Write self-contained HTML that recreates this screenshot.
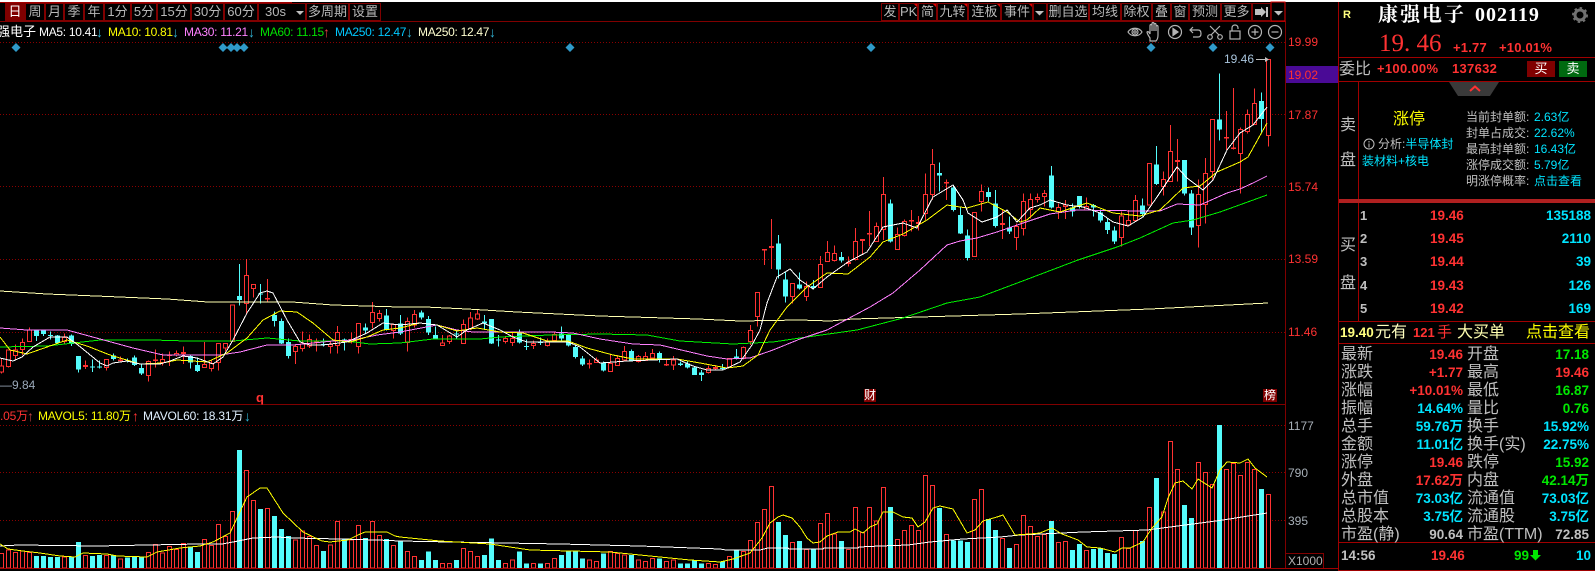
<!DOCTYPE html>
<html><head><meta charset="utf-8"><style>
html,body{margin:0;padding:0;background:#000}
#p{position:relative;width:1595px;height:571px;overflow:hidden;background:#000;font-family:"Liberation Sans","WenQuanYi Zen Hei","Noto Sans CJK SC",sans-serif;color:#c0c0c0}
svg{position:absolute;left:0;top:0}
.t{position:absolute;white-space:nowrap;line-height:16px;font-size:12px}
.ar{font-size:14px}
.b{position:absolute;top:3px;height:18px;border:1px solid #800000;box-sizing:border-box;text-align:center;line-height:16px;color:#b8b8b8;font-size:13px;white-space:nowrap;overflow:hidden}
.rd{color:#ff3232}.cy{color:#00e4ff}.gr{color:#00e800}.ye{color:#ffff00}.wh{color:#fff}.g{color:#c0c0c0}
.bd{font-weight:bold}
.r{position:absolute;left:1341px;width:248px;height:18px;line-height:18px;font-size:13.5px;font-weight:bold}
.r span{position:absolute;top:0;white-space:nowrap}
.r .a,.r .c{font-size:16px;font-weight:normal;color:#c0c0c0}
.r .a{left:0}.r .b2{right:126px}.r .c{left:126px}.r .d{right:0}
.rw,.cw{fill:none;stroke-width:3}.rw{stroke:#ff3232}.cw{stroke:#54fcfc}
.rb{fill:#000;stroke:#ff3232;stroke-width:3}.cb{fill:#54fcfc;stroke:none}
</style></head><body><div id="p">
<svg width="1595" height="571" viewBox="0 0 1595 571">
<rect x="0" y="0" width="1595" height="2" fill="#fff"/>
<rect x="0" y="2" width="292" height="1" fill="#a00000"/>
<g stroke="#8a0000" stroke-width="1" stroke-dasharray="1 2" fill="none">
<path d="M0 42.5H1285M0 114.5H1285M0 186.5H1285M0 259.5H1285M0 332.5H1285M0 425.5H1285M0 472.5H1285M0 520.5H1285"/>
</g>
<g fill="#2f9ac9"><path d="M16 43l4.5 4.5-4.5 4.5-4.5-4.5zM223 43l4.5 4.5-4.5 4.5-4.5-4.5zM231 43l4.5 4.5-4.5 4.5-4.5-4.5zM237 43l4.5 4.5-4.5 4.5-4.5-4.5zM244 43l4.5 4.5-4.5 4.5-4.5-4.5zM570 43l4.5 4.5-4.5 4.5-4.5-4.5zM871 43l4.5 4.5-4.5 4.5-4.5-4.5zM1151 43l4.5 4.5-4.5 4.5-4.5-4.5zM1213 43l4.5 4.5-4.5 4.5-4.5-4.5zM1270 43l4.5 4.5-4.5 4.5-4.5-4.5z"/></g>

<g shape-rendering="crispEdges">
<g transform="translate(0,240) scale(.33333)">
<path class="rw" d="M4.5 355V400M25.5 330V382M46.5 313V360M67.5 295V345M88.5 262V305M193.5 280V312M256.5 362V387M319.5 358V392M361.5 350V368M445.5 362V425M466.5 328V382M487.5 340V376M508.5 334V378M529.5 332V350M550.5 320V372M613.5 306V383M634.5 360V395M655.5 310V392M676.5 310V335M697.5 195V305M739.5 57V220M760.5 133V172M802.5 117V184M886.5 312V372M907.5 275V335M928.5 283V324M949.5 295V335M991.5 305V340M1012.5 258V340M1054.5 277V310M1075.5 250V340M1117.5 186V266M1138.5 210V245M1180.5 250V296"/>
<path class="rb" d="M-1.5 378h12V396h-12zM19.5 330h12V380h-12zM40.5 330h12V347h-12zM61.5 307h12V328h-12zM82.5 270h12V305h-12zM187.5 292h12V304h-12zM250.5 376h12V380h-12zM313.5 358h12V382h-12zM355.5 360h12V362h-12zM439.5 365h12V406h-12zM460.5 360h12V362h-12zM481.5 358h12V368h-12zM502.5 345h12V347h-12zM523.5 340h12V345h-12zM544.5 338h12V340h-12zM607.5 373h12V383h-12zM628.5 370h12V386h-12zM649.5 310h12V368h-12zM670.5 310h12V324h-12zM691.5 195h12V305h-12zM733.5 106h12V190h-12zM754.5 133h12V146h-12zM796.5 175h12V177h-12zM880.5 320h12V334h-12zM901.5 312h12V326h-12zM922.5 298h12V318h-12zM943.5 305h12V308h-12zM985.5 314h12V320h-12zM1006.5 277h12V316h-12zM1048.5 298h12V300h-12zM1069.5 250h12V319h-12zM1111.5 217h12V248h-12zM1132.5 220h12V236h-12zM1174.5 253h12V272h-12z"/>
<path class="cw" d="M109.5 268V303M130.5 268V288M151.5 274V298M172.5 285V312M214.5 283V318M235.5 348V398M277.5 358V396M298.5 362V385M340.5 340V362M382.5 355V368M403.5 346V378M424.5 373V405M571.5 345V386M592.5 352V396M718.5 72V197M781.5 132V190M823.5 215V260M844.5 235V312M865.5 295V356M970.5 295V320M1033.5 295V332M1096.5 250V282M1159.5 207V272"/>
<path class="cb" d="M102 270h15V288h-15zM123 270h15V282h-15zM144 285h15V288h-15zM165 287h15V309h-15zM207 287h15V312h-15zM228 348h15V389h-15zM270 380h15V383h-15zM291 380h15V383h-15zM333 347h15V357h-15zM375 361h15V364h-15zM396 352h15V375h-15zM417 384h15V400h-15zM564 348h15V368h-15zM585 375h15V393h-15zM711 168h15V180h-15zM774 160h15V163h-15zM816 225h15V243h-15zM837 243h15V310h-15zM858 306h15V348h-15zM963 312h15V315h-15zM1026 298h15V306h-15zM1089 262h15V272h-15zM1152 226h15V270h-15z"/>
</g>
<g transform="translate(400,280) scale(.33333)">
<path class="rw" d="M22.5 113V215M43.5 90V143M127.5 165V196M148.5 165V192M190.5 118V191M211.5 96V150M232.5 88V120M316.5 168V190M337.5 155V198M400.5 182V207M442.5 175V200M463.5 155V185M568.5 238V266M589.5 232V248M631.5 225V275M652.5 225V258M673.5 198V243M715.5 225V248M736.5 216V243M757.5 207V238M799.5 235V258M820.5 228V270M925.5 256V281M946.5 255V270M988.5 236V263M1030.5 200V238M1051.5 135V195M1072.5 37V140"/>
<path class="rb" d="M16.5 125h12V188h-12zM37.5 103h12V135h-12zM121.5 189h12V196h-12zM142.5 168h12V185h-12zM184.5 133h12V191h-12zM205.5 114h12V145h-12zM226.5 102h12V117h-12zM310.5 176h12V185h-12zM331.5 175h12V188h-12zM394.5 190h12V196h-12zM436.5 183h12V197h-12zM457.5 163h12V181h-12zM562.5 250h12V252h-12zM583.5 240h12V247h-12zM625.5 251h12V275h-12zM646.5 235h12V256h-12zM667.5 214h12V240h-12zM709.5 230h12V245h-12zM730.5 230h12V241h-12zM751.5 220h12V234h-12zM793.5 253h12V255h-12zM814.5 240h12V255h-12zM919.5 265h12V277h-12zM940.5 263h12V265h-12zM982.5 236h12V263h-12zM1024.5 202h12V236h-12zM1045.5 151h12V185h-12zM1066.5 37h12V110h-12z"/>
<path class="cw" d="M1.5 105V165M64.5 92V118M85.5 108V165M106.5 140V178M169.5 152V175M253.5 105V150M274.5 117V192M295.5 165V200M358.5 148V190M379.5 178V210M421.5 172V195M484.5 140V185M505.5 165V199M526.5 195V235M547.5 228V258M610.5 245V274M694.5 208V244M778.5 215V248M841.5 245V258M862.5 245V266M883.5 258V285M904.5 270V303M967.5 252V272M1009.5 207V238"/>
<path class="cb" d="M-6 130h15V160h-15zM57 98h15V112h-15zM78 117h15V158h-15zM99 165h15V175h-15zM162 160h15V163h-15zM246 125h15V130h-15zM267 117h15V190h-15zM288 178h15V182h-15zM351 155h15V187h-15zM372 198h15V201h-15zM414 186h15V189h-15zM477 160h15V176h-15zM498 165h15V197h-15zM519 201h15V231h-15zM540 235h15V254h-15zM603 248h15V272h-15zM687 213h15V242h-15zM771 219h15V236h-15zM834 250h15V255h-15zM855 251h15V263h-15zM876 262h15V285h-15zM897 277h15V285h-15zM960 264h15V267h-15zM1002 229h15V236h-15z"/>
</g>
<g transform="translate(720,130) scale(.33333)">
<path class="rw" d="M133.5 358V405M154.5 267V417M217.5 460V520M259.5 455V513M301.5 378V472M322.5 333V395M343.5 346V395M385.5 380V410M406.5 294V392M427.5 328V375M448.5 243V350M469.5 277V335M490.5 141V330M532.5 292V358M553.5 268V320M574.5 240V305M595.5 258V302M616.5 130V270M637.5 57V210M679.5 148V210M763.5 247V380M784.5 163V245"/>
<path class="rb" d="M127.5 358h12V360h-12zM148.5 350h12V352h-12zM211.5 460h12V500h-12zM253.5 470h12V499h-12zM295.5 403h12V472h-12zM316.5 367h12V394h-12zM337.5 371h12V391h-12zM379.5 397h12V400h-12zM400.5 334h12V388h-12zM421.5 328h12V331h-12zM442.5 310h12V312h-12zM463.5 289h12V334h-12zM484.5 193h12V298h-12zM526.5 314h12V358h-12zM547.5 274h12V316h-12zM568.5 271h12V273h-12zM589.5 278h12V280h-12zM610.5 193h12V251h-12zM631.5 103h12V193h-12zM673.5 157h12V159h-12zM757.5 247h12V380h-12zM778.5 184h12V215h-12z"/>
<path class="cw" d="M175.5 315V445M196.5 425V518M238.5 427V478M280.5 450V478M364.5 366V398M511.5 208V338M658.5 98V185M700.5 165V245M721.5 230V312M742.5 298V392M805.5 172V215M826.5 180V292"/>
<path class="cb" d="M168 340h15V418h-15zM189 448h15V500h-15zM231 463h15V476h-15zM273 468h15V474h-15zM357 381h15V392h-15zM504 220h15V335h-15zM651 129h15V137h-15zM693 172h15V240h-15zM714 255h15V311h-15zM735 316h15V384h-15zM798 186h15V201h-15zM819 220h15V288h-15z"/>
</g>
<g transform="translate(1000,50) scale(.33333)">
<path class="rw" d="M7.5 480V567M49.5 520V600M70.5 430V556M91.5 430V506M112.5 430V458M133.5 420V470M175.5 460V507M196.5 450V507M259.5 442V482M364.5 485V590M385.5 480V530M406.5 435V515M448.5 340V465M490.5 365V437M511.5 225V395M532.5 267V395M595.5 388V593M616.5 324V520M637.5 208V390M679.5 183V300M700.5 114V298M721.5 232V430M742.5 178V250M763.5 115V225M805.5 28V290"/>
<path class="rb" d="M1.5 521h12V523h-12zM43.5 530h12V563h-12zM64.5 455h12V536h-12zM85.5 448h12V478h-12zM106.5 442h12V449h-12zM127.5 430h12V440h-12zM169.5 472h12V485h-12zM190.5 465h12V470h-12zM253.5 470h12V480h-12zM358.5 498h12V562h-12zM379.5 512h12V525h-12zM400.5 451h12V512h-12zM442.5 340h12V465h-12zM484.5 388h12V410h-12zM505.5 304h12V395h-12zM526.5 331h12V335h-12zM589.5 433h12V526h-12zM610.5 370h12V463h-12zM631.5 208h12V365h-12zM673.5 262h12V264h-12zM694.5 294h12V296h-12zM715.5 238h12V310h-12zM736.5 193h12V245h-12zM757.5 160h12V224h-12zM799.5 28h12V257h-12z"/>
<path class="cw" d="M28.5 500V552M154.5 348V475M217.5 460V500M238.5 438V475M280.5 462V500M301.5 478V517M322.5 505V552M343.5 530V582M427.5 445V500M469.5 288V405M553.5 330V436M574.5 420V555M658.5 70V272M784.5 127V250"/>
<path class="cb" d="M21 533h15V545h-15zM147 376h15V473h-15zM210 472h15V485h-15zM231 438h15V470h-15zM273 465h15V472h-15zM294 487h15V512h-15zM315 516h15V540h-15zM336 541h15V575h-15zM420 466h15V492h-15zM462 343h15V402h-15zM546 330h15V430h-15zM567 430h15V533h-15zM651 208h15V239h-15zM777 153h15V207h-15z"/>
</g>

<!-- MA lines -->
<g fill="none" stroke-width="1">
<polyline stroke="#ffffb0" points="0,291 47,294 96,296 167,299 208,302 292,302 333,305 400,307 425,307 467,309 517,312 600,316 698,319 740,321 800,320 830,321 853,319 920,317 1020,314 1150,309 1268,303"/>
<polyline stroke="#00f000" points="0,347 47,346 100,340 153,340 187,341 233,341 267,338 300,341 347,341 370,344 400,343 433,339 480,339 500,337 550,335 600,334 647,335 680,341 733,344 773,342 800,338 857,330 903,318 947,303 980,297 1020,282 1078,260 1117,247 1140,238 1173,223 1193,220 1220,212 1267,195"/>
<polyline stroke="#ff80ff" points="0,328 27,330 67,330 100,339 133,348 163,355 220,355 240,352 267,345 293,345 333,341 353,340 377,335 400,332 437,325 457,330 473,332 550,332 573,333 600,339 633,344 660,345 707,356 727,359 750,358 773,350 800,339 827,330 870,307 893,293 920,270 947,245 960,241 977,238 997,232 1023,223 1050,214 1077,210 1143,211 1160,211 1177,204 1200,205 1227,193 1240,189 1253,183 1267,176"/>
<polyline stroke="#ffff00" points="0,337 10,350 27,354 47,347 67,340 87,346 110,355 140,364 163,363 177,360 207,362 227,353 247,338 263,320 280,311 297,312 313,323 333,340 350,342 367,337 383,330 400,328 420,323 437,325 457,331 477,328 500,332 523,333 547,341 568,341 587,348 613,355 633,359 677,359 700,363 727,368 743,366 758,355 770,330 787,307 807,287 827,273 848,274 870,257 883,242 903,234 927,220 947,205 967,208 988,202 1007,212 1020,222 1027,220 1040,208 1060,212 1087,203 1113,213 1140,216 1160,210 1183,188 1200,186 1217,172 1240,162 1248,157 1267,123"/>
<polyline stroke="#ffffff" points="0,358 13,361 22,357 33,347 50,337 67,337 78,345 100,363 107,366 113,363 127,361 140,364 160,364 170,361 183,356 197,358 213,364 223,357 233,340 247,313 260,293 267,291 273,293 287,320 300,342 310,345 323,345 347,342 367,333 383,323 400,325 420,323 437,325 457,337 467,330 483,323 500,330 513,337 527,342 547,342 568,342 580,347 600,363 627,361 677,359 693,366 707,370 723,370 740,362 752,345 760,330 767,303 777,277 790,269 800,280 813,289 827,277 848,262 867,252 883,227 903,223 917,228 933,197 953,185 963,200 968,213 982,222 997,217 1007,210 1017,222 1030,208 1040,205 1050,200 1067,205 1083,207 1100,213 1113,222 1128,226 1143,217 1157,197 1177,167 1187,178 1203,190 1213,180 1227,150 1240,133 1253,125 1267,107"/>
</g>

<!-- Volume bars -->
<g transform="translate(0,395) scale(.33333)">
<path class="rb" d="M-1.5 475h12V519h-12zM19.5 465h12V519h-12zM40.5 472h12V519h-12zM61.5 468h12V519h-12zM82.5 472h12V519h-12zM187.5 486h12V519h-12zM250.5 481h12V519h-12zM313.5 481h12V519h-12zM355.5 492h12V519h-12zM439.5 472h12V519h-12zM460.5 448h12V519h-12zM481.5 474h12V519h-12zM502.5 454h12V519h-12zM523.5 464h12V519h-12zM544.5 445h12V519h-12zM607.5 433h12V519h-12zM628.5 452h12V519h-12zM649.5 388h12V519h-12zM670.5 424h12V519h-12zM691.5 349h12V519h-12zM733.5 226h12V519h-12zM754.5 316h12V519h-12zM796.5 340h12V519h-12zM880.5 435h12V519h-12zM901.5 408h12V519h-12zM922.5 425h12V519h-12zM943.5 451h12V519h-12zM985.5 450h12V519h-12zM1006.5 379h12V519h-12zM1048.5 435h12V519h-12zM1069.5 391h12V519h-12zM1111.5 379h12V519h-12zM1132.5 421h12V519h-12zM1174.5 451h12V519h-12z"/>
<path class="cb" d="M102 483h15V519h-15zM123 483h15V519h-15zM144 486h15V519h-15zM165 486h15V519h-15zM207 486h15V519h-15zM228 441h15V519h-15zM270 483h15V519h-15zM291 480h15V519h-15zM333 482h15V519h-15zM375 488h15V519h-15zM396 484h15V519h-15zM417 484h15V519h-15zM564 456h15V519h-15zM585 471h15V519h-15zM711 165h15V519h-15zM774 342h15V519h-15zM816 363h15V519h-15zM837 402h15V519h-15zM858 423h15V519h-15zM963 468h15V519h-15zM1026 430h15V519h-15zM1089 429h15V519h-15zM1152 432h15V519h-15z"/>
</g>
<g transform="translate(400,395) scale(.33333)">
<path class="rb" d="M16.5 470h12V519h-12zM37.5 485h12V519h-12zM121.5 505h12V519h-12zM142.5 505h12V519h-12zM184.5 460h12V519h-12zM205.5 470h12V519h-12zM226.5 485h12V519h-12zM310.5 505h12V519h-12zM331.5 495h12V519h-12zM394.5 505h12V519h-12zM436.5 505h12V519h-12zM457.5 490h12V519h-12zM562.5 495h12V519h-12zM583.5 500h12V519h-12zM625.5 470h12V519h-12zM646.5 475h12V519h-12zM667.5 480h12V519h-12zM709.5 495h12V519h-12zM730.5 500h12V519h-12zM751.5 490h12V519h-12zM793.5 500h12V519h-12zM814.5 495h12V519h-12zM919.5 505h12V519h-12zM940.5 508h12V519h-12z"/>
<path class="cb" d="M-6 440h15V519h-15zM57 495h15V519h-15zM78 470h15V519h-15zM99 495h15V519h-15zM162 495h15V519h-15zM246 480h15V519h-15zM267 430h15V519h-15zM288 495h15V519h-15zM351 470h15V519h-15zM372 505h15V519h-15zM414 505h15V519h-15zM477 480h15V519h-15zM498 470h15V519h-15zM519 470h15V519h-15zM540 490h15V519h-15zM603 475h15V519h-15zM687 480h15V519h-15zM771 490h15V519h-15zM834 505h15V519h-15zM855 505h15V519h-15zM876 495h15V519h-15zM897 505h15V519h-15z"/>
</g>
<g transform="translate(720,395) scale(.33333)">
<path class="rb" d="M22.5 484h12V519h-12zM64.5 469h12V519h-12zM85.5 436h12V519h-12zM106.5 382h12V519h-12zM127.5 343h12V519h-12zM148.5 274h12V519h-12zM211.5 442h12V519h-12zM253.5 464h12V519h-12zM295.5 385h12V519h-12zM316.5 355h12V519h-12zM337.5 417h12V519h-12zM379.5 463h12V519h-12zM400.5 337h12V519h-12zM421.5 412h12V519h-12zM442.5 337h12V519h-12zM463.5 378h12V519h-12zM484.5 277h12V519h-12zM526.5 433h12V519h-12zM547.5 406h12V519h-12zM568.5 391h12V519h-12zM589.5 406h12V519h-12zM610.5 241h12V519h-12zM631.5 271h12V519h-12zM673.5 418h12V519h-12zM757.5 313h12V519h-12zM778.5 283h12V519h-12zM841.5 430h12V519h-12zM883.5 448h12V519h-12z"/>
<path class="cb" d="M0 500h15V519h-15zM42 467h15V519h-15zM168 381h15V519h-15zM189 420h15V519h-15zM231 438h15V519h-15zM273 464h15V519h-15zM357 438h15V519h-15zM504 336h15V519h-15zM651 339h15V519h-15zM693 436h15V519h-15zM714 436h15V519h-15zM735 441h15V519h-15zM798 372h15V519h-15zM819 405h15V519h-15zM861 459h15V519h-15z"/>
</g>
<g transform="translate(1020,395) scale(.33333)">
<path class="rb" d="M4.5 361h12V519h-12zM25.5 394h12V519h-12zM46.5 424h12V519h-12zM67.5 418h12V519h-12zM109.5 442h12V519h-12zM130.5 439h12V519h-12zM193.5 466h12V519h-12zM298.5 427h12V519h-12zM319.5 460h12V519h-12zM340.5 406h12V519h-12zM382.5 337h12V519h-12zM424.5 351h12V519h-12zM445.5 139h12V519h-12zM466.5 223h12V519h-12zM529.5 202h12V519h-12zM550.5 232h12V519h-12zM571.5 268h12V519h-12zM613.5 223h12V519h-12zM634.5 205h12V519h-12zM655.5 241h12V519h-12zM676.5 202h12V519h-12zM697.5 223h12V519h-12zM739.5 298h12V519h-12z"/>
<path class="cb" d="M87 378h15V519h-15zM150 465h15V519h-15zM171 447h15V519h-15zM213 462h15V519h-15zM234 460h15V519h-15zM255 474h15V519h-15zM276 477h15V519h-15zM360 438h15V519h-15zM402 249h15V519h-15zM486 330h15V519h-15zM507 369h15V519h-15zM591 90h15V519h-15zM717 282h15V519h-15z"/>
</g>
<g fill="none" stroke-width="1">
<polyline stroke="#ffffff" points="0,546 19,545 96,546 200,544 222,544 233,542 243,540 253,538 277,537 293,538 340,539 377,540 400,541 450,542 560,544 640,546 720,549 726,550 760,550 768,548 788,548 789,549 823,549 824,548 858,548 859,547 880,546 908,545 930,542 963,539 1000,537 1020,535 1083,532 1147,530 1170,527 1193,524 1223,520 1267,513"/>
<polyline stroke="#ffff00" points="0,544 8,549 23,551 40,553 60,556 75,557 83,553 107,554 117,556 147,557 157,552 180,548 200,546 213,542 230,533 237,518 247,497 260,488 267,488 283,513 303,532 322,541 330,542 348,540 358,535 365,532 387,532 395,536 400,537 440,541 490,544 530,550 570,551 610,552 650,556 690,560 720,562 733,559 750,553 762,538 770,523 778,517 783,515 792,518 800,527 807,538 813,543 820,542 827,536 838,532 850,532 855,529 863,533 870,527 877,524 883,512 893,512 903,517 912,518 918,527 925,522 933,508 940,506 953,509 967,533 975,530 983,521 997,517 1003,515 1015,535 1030,534 1040,533 1052,528 1062,534 1078,540 1087,547 1100,548 1115,552 1122,548 1130,548 1143,542 1152,528 1162,517 1168,498 1175,483 1183,481 1192,489 1198,479 1212,488 1220,470 1227,462 1240,463 1248,459 1255,468 1267,477"/>
</g>

<!-- frame lines -->
<rect x="0" y="404" width="1285" height="1" fill="#800000"/>
<rect x="0" y="568" width="1338" height="1" fill="#a00000"/>
<rect x="1285" y="21" width="1" height="547" fill="#800000"/>
<rect x="1338" y="2" width="1" height="569" fill="#a00000"/>
<rect x="0" y="21" width="1285" height="1" fill="#800000"/>
<rect x="1286" y="66" width="52" height="17" fill="#4a0a96"/>
<rect x="1286" y="553" width="37" height="1" fill="#800000"/>
<rect x="1323" y="553" width="1" height="15" fill="#800000"/>
<rect x="1339" y="57" width="256" height="1" fill="#a00000"/>
<rect x="1339" y="81" width="256" height="1" fill="#a00000"/>
<rect x="1358" y="82" width="1" height="239" fill="#a00000"/>
<rect x="1339" y="199" width="256" height="4" fill="#b02020"/>
<rect x="1339" y="321" width="256" height="1" fill="#a00000"/>
<rect x="1339" y="343" width="256" height="1" fill="#a00000"/>
<rect x="1339" y="542" width="256" height="1" fill="#a00000"/>
<rect x="1339" y="570" width="256" height="1" fill="#a00000"/>
</g>
<polygon points="1449,82 1499,82 1490,96 1458,96" fill="#3a3a3a"/>
<polyline points="1470,91 1475,86.5 1480,91" fill="none" stroke="#ff3232" stroke-width="2"/>

<!-- 19.46 arrow -->
<path d="M1256 59.5H1266" stroke="#c0c0c0"/><path d="M1265 57l4 2.5-4 2.5z" fill="#c0c0c0"/>
<!-- corner triangles -->
<g fill="#e00000"><path d="M913 3h5v5zM932 3h5v5zM963 3h5v5zM996 3h5v5zM1028 3h5v5z"/></g>
<!-- toolbar small arrows -->
<g fill="#c0c0c0"><path d="M296 11h8l-4 4zM1035 11h9l-4.500 4.500zM1274 11h9l-4.500 4.500zM1255 9h6v-2l5 5-5 5v-2h-6zM1266 7h2v10h-2z"/></g>
<rect x="1271" y="2" width="14" height="19" fill="none" stroke="#e00000" stroke-width="1"/>

<!-- top-right icons -->
<g fill="none" stroke="#b4b4b4" stroke-width="1.2">
<path d="M1128 32c3-5 11-5 14 0-3 5-11 5-14 0z"/><circle cx="1135" cy="32" r="3"/><circle cx="1135" cy="32" r="1.2"/>
<path d="M1150 38c-2-3-3-5-3-6 1-1 2 0 3 2v-8c0-2 2-2 2 0v5-7c0-2 2-2 2 0v7-6c0-2 2-2 2 0v6-4c0-2 2-2 2 0v8c0 3-1 5-2 6h-6z"/>
<circle cx="1175" cy="32" r="6.500"/><path d="M1173 28.500l5 3.500-5 3.500z" fill="#b4b4b4"/>
<path d="M1193 27l-3 3 3 3M1190 30h8c2 0 3 1.500 3 3.500s-1 3.500-3 3.500h-5"/>
<path d="M1210 26l9 9M1220 26l-9 9"/><circle cx="1210" cy="37" r="2.300"/><circle cx="1220" cy="37" r="2.300"/>
<rect x="1230" y="31" width="10" height="8"/><path d="M1232 31v-3c0-4 6-4 6 0v1"/>
<circle cx="1255" cy="32" r="6.500"/><path d="M1251.500 32h7M1255 28.500v7"/>
<circle cx="1275" cy="32" r="6.500"/><path d="M1271.500 32h7"/>
</g>
<!-- gear -->
<circle cx="1580" cy="15" r="5" fill="none" stroke="#707070" stroke-width="3"/>
<circle cx="1580" cy="15" r="7" fill="none" stroke="#707070" stroke-width="2" stroke-dasharray="2.500 2.900"/>
<!-- info circle -->
<circle cx="1369" cy="144" r="5" fill="none" stroke="#c0c0c0"/><path d="M1369 141v1.500M1369 143.500v4" stroke="#c0c0c0"/>
<!-- green arrow -->
<path d="M1533 550h5v5h3l-5.500 5.500-5.500-5.500h3z" fill="#00e800"/>
</svg>

<!-- left toolbar -->
<div class="b wh" style="left:5px;width:20px;background:#800000;color:#fff">日</div>
<div class="b" style="left:25px;width:20px">周</div>
<div class="b" style="left:45px;width:19px">月</div>
<div class="b" style="left:64px;width:20px">季</div>
<div class="b" style="left:84px;width:20px">年</div>
<div class="b" style="left:104px;width:27px">1分</div>
<div class="b" style="left:131px;width:26px">5分</div>
<div class="b" style="left:157px;width:34px">15分</div>
<div class="b" style="left:191px;width:33px">30分</div>
<div class="b" style="left:224px;width:34px">60分</div>
<div class="b" style="left:258px;width:48px;text-align:left;padding-left:6px;background:none">30s</div>
<div class="b" style="left:306px;width:43px">多周期</div>
<div class="b" style="left:349px;width:32px">设置</div>
<!-- right toolbar -->
<div class="b" style="left:881px;width:18px">发</div>
<div class="b" style="left:899px;width:19px">PK</div>
<div class="b" style="left:918px;width:19px">简</div>
<div class="b" style="left:937px;width:31px">九转</div>
<div class="b" style="left:968px;width:33px">连板</div>
<div class="b" style="left:1001px;width:32px">事件</div>
<div class="b" style="left:1033px;width:14px;background:none"></div>
<div class="b" style="left:1047px;width:42px">删自选</div>
<div class="b" style="left:1089px;width:32px">均线</div>
<div class="b" style="left:1121px;width:31px">除权</div>
<div class="b" style="left:1152px;width:19px">叠</div>
<div class="b" style="left:1171px;width:18px">窗</div>
<div class="b" style="left:1189px;width:32px">预测</div>
<div class="b" style="left:1221px;width:31px">更多</div>
<div class="b" style="left:1252px;width:19px;background:none"></div>

<!-- legend -->
<div class="t wh" style="left:-11px;top:24px;font-size:13px;width:47px;overflow:hidden;color:#fff;text-align:right">强电子</div>
<div class="t" style="left:39px;top:24px;color:#fff;letter-spacing:-.3px">MA5: 10.41</div><div class="t ar" style="left:96px;top:24px;color:#30b0d0">↓</div>
<div class="t ye" style="left:108px;top:24px;letter-spacing:-.3px">MA10: 10.81</div><div class="t ar" style="left:172px;top:24px;color:#30b0d0">↓</div>
<div class="t" style="left:184px;top:24px;color:#ff80ff;letter-spacing:-.3px">MA30: 11.21</div><div class="t ar" style="left:248px;top:24px;color:#30b0d0">↓</div>
<div class="t" style="left:260px;top:24px;color:#00e000;letter-spacing:-.3px">MA60: 11.15</div><div class="t ar" style="left:323px;top:24px;color:#e04040">↑</div>
<div class="t" style="left:335px;top:24px;color:#00c8ff;letter-spacing:-.3px">MA250: 12.47</div><div class="t ar" style="left:406px;top:24px;color:#30b0d0">↓</div>
<div class="t" style="left:418px;top:24px;color:#ffffd0;letter-spacing:-.3px">MA250: 12.47</div><div class="t ar" style="left:489px;top:24px;color:#30b0d0">↓</div>

<div class="t" style="left:1224px;top:51px;color:#a8c4dc">19.46</div>
<div class="t" style="left:0;top:377px;color:#9aa8b8">—9.84</div>
<div class="t rd bd" style="left:256px;top:390px;font-size:13px">q</div>
<div class="t wh" style="left:864px;top:389px;width:12px;height:13px;line-height:13px;background:#800000;font-size:12px;text-align:center;overflow:hidden">财</div>
<div class="t wh" style="left:1263px;top:389px;width:14px;height:13px;line-height:13px;background:#800000;font-size:12px;text-align:center;overflow:hidden">榜</div>

<!-- volume legend -->
<div class="t rd" style="left:0;top:408px;letter-spacing:-.2px">.05万</div><div class="t ar" style="left:27px;top:408px;color:#c04040">↑</div>
<div class="t ye" style="left:38px;top:408px;letter-spacing:-.2px">MAVOL5: 11.80万</div><div class="t ar rd" style="left:132px;top:408px">↑</div>
<div class="t" style="left:143px;top:408px;color:#e0f0ff;letter-spacing:-.2px">MAVOL60: 18.31万</div><div class="t ar" style="left:244px;top:408px;color:#30b0d0">↓</div>

<!-- axis labels -->
<div class="t rd" style="left:1288px;top:34px">19.99</div>
<div class="t rd" style="left:1288px;top:107px">17.87</div>
<div class="t rd" style="left:1288px;top:179px">15.74</div>
<div class="t rd" style="left:1288px;top:251px">13.59</div>
<div class="t rd" style="left:1288px;top:324px">11.46</div>
<div class="t rd" style="left:1288px;top:67px;">19.02</div>
<div class="t" style="left:1288px;top:418px;color:#a8b0b8">1177</div>
<div class="t" style="left:1288px;top:465px;color:#a8b0b8">790</div>
<div class="t" style="left:1288px;top:513px;color:#a8b0b8">395</div>
<div class="t" style="left:1288px;top:553px;color:#b0b0b0">X1000</div>

<!-- right panel header -->
<div class="t bd" style="left:1343px;top:7px;color:#ffff80;font-size:11px">R</div>
<div class="t wh" style="left:1378px;top:3px;line-height:24px;font-size:20px;letter-spacing:2px;font-weight:bold;font-family:'Liberation Serif','Noto Serif CJK SC',serif">康强电子</div>
<div class="t wh" style="left:1475px;top:3px;line-height:24px;font-size:20px;letter-spacing:1px;font-weight:bold;font-family:'Liberation Serif',serif">002119</div>
<div class="t rd" style="left:1379px;top:30px;line-height:28px;font-size:25px;font-family:'Liberation Serif',serif">19. 46</div>
<div class="t rd bd" style="left:1453px;top:40px;font-size:13px;letter-spacing:.2px">+1.77</div>
<div class="t rd bd" style="left:1499px;top:40px;font-size:13px;letter-spacing:.2px">+10.01%</div>
<div class="t" style="left:1339px;top:62px;font-size:16px">委比</div>
<div class="t rd bd" style="left:1377px;top:61px;font-size:13px;letter-spacing:.3px">+100.00%</div>
<div class="t rd bd" style="left:1452px;top:61px;font-size:13px;letter-spacing:.3px">137632</div>
<div class="t wh" style="left:1527px;top:61px;width:28px;height:16px;background:#800000;text-align:center;font-size:13px">买</div>
<div class="t wh" style="left:1559px;top:61px;width:28px;height:16px;background:#006a10;text-align:center;font-size:13px">卖</div>

<!-- sell section -->
<div class="t" style="left:1340px;top:118px;font-size:16px">卖</div>
<div class="t" style="left:1340px;top:153px;font-size:16px">盘</div>
<div class="t ye" style="left:1393px;top:112px;font-size:16px">涨停</div>
<div class="t" style="left:1378px;top:136px">分析:<span class="cy">半导体封</span></div>
<div class="t cy" style="left:1362px;top:153px">装材料+核电</div>
<div class="t" style="left:1466px;top:109px">当前封单额:</div><div class="t cy" style="left:1534px;top:109px">2.63亿</div>
<div class="t" style="left:1466px;top:125px">封单占成交:</div><div class="t cy" style="left:1534px;top:125px">22.62%</div>
<div class="t" style="left:1466px;top:141px">最高封单额:</div><div class="t cy" style="left:1534px;top:141px">16.43亿</div>
<div class="t" style="left:1466px;top:157px">涨停成交额:</div><div class="t cy" style="left:1534px;top:157px">5.79亿</div>
<div class="t" style="left:1466px;top:173px">明涨停概率:</div><div class="t cy" style="left:1534px;top:173px">点击查看</div>

<!-- buy section -->
<div class="t" style="left:1340px;top:238px;font-size:16px">买</div>
<div class="t" style="left:1340px;top:276px;font-size:16px">盘</div>
<div class="t g bd" style="left:1360px;top:208px;font-size:13px">1</div><div class="t rd bd" style="left:1430px;top:208px;font-size:13.5px">19.46</div><div class="t cy bd" style="right:4px;top:208px;font-size:13.5px">135188</div>
<div class="t g bd" style="left:1360px;top:231px;font-size:13px">2</div><div class="t rd bd" style="left:1430px;top:231px;font-size:13.5px">19.45</div><div class="t cy bd" style="right:4px;top:231px;font-size:13.5px">2110</div>
<div class="t g bd" style="left:1360px;top:254px;font-size:13px">3</div><div class="t rd bd" style="left:1430px;top:254px;font-size:13.5px">19.44</div><div class="t cy bd" style="right:4px;top:254px;font-size:13.5px">39</div>
<div class="t g bd" style="left:1360px;top:278px;font-size:13px">4</div><div class="t rd bd" style="left:1430px;top:278px;font-size:13.5px">19.43</div><div class="t cy bd" style="right:4px;top:278px;font-size:13.5px">126</div>
<div class="t g bd" style="left:1360px;top:301px;font-size:13px">5</div><div class="t rd bd" style="left:1430px;top:301px;font-size:13.5px">19.42</div><div class="t cy bd" style="right:4px;top:301px;font-size:13.5px">169</div>

<div class="t bd" style="left:1340px;top:325px;font-size:13.5px;color:#ffff80">19.40</div>
<div class="t" style="left:1375px;top:325px;font-size:16px;color:#ffffc0">元有</div>
<div class="t rd bd" style="left:1413px;top:325px;font-size:13px">121</div>
<div class="t rd" style="left:1437px;top:325px;font-size:15px">手</div>
<div class="t" style="left:1457px;top:325px;font-size:16px;color:#ffffb0">大买单</div>
<div class="t ye" style="left:1526px;top:325px;font-size:16px">点击查看</div>

<!-- stats -->
<div class="r" style="top:346px"><span class="a">最新</span><span class="b2 rd">19.46</span><span class="c">开盘</span><span class="d gr">17.18</span></div>
<div class="r" style="top:364px"><span class="a">涨跌</span><span class="b2 rd">+1.77</span><span class="c">最高</span><span class="d rd">19.46</span></div>
<div class="r" style="top:382px"><span class="a">涨幅</span><span class="b2 rd">+10.01%</span><span class="c">最低</span><span class="d gr">16.87</span></div>
<div class="r" style="top:400px"><span class="a">振幅</span><span class="b2 cy">14.64%</span><span class="c">量比</span><span class="d gr">0.76</span></div>
<div class="r" style="top:418px"><span class="a">总手</span><span class="b2 cy">59.76万</span><span class="c">换手</span><span class="d cy">15.92%</span></div>
<div class="r" style="top:436px"><span class="a">金额</span><span class="b2 cy">11.01亿</span><span class="c">换手(实)</span><span class="d cy">22.75%</span></div>
<div class="r" style="top:454px"><span class="a">涨停</span><span class="b2 rd">19.46</span><span class="c">跌停</span><span class="d gr">15.92</span></div>
<div class="r" style="top:472px"><span class="a">外盘</span><span class="b2 rd">17.62万</span><span class="c">内盘</span><span class="d gr">42.14万</span></div>
<div class="r" style="top:490px"><span class="a">总市值</span><span class="b2 cy">73.03亿</span><span class="c">流通值</span><span class="d cy">73.03亿</span></div>
<div class="r" style="top:508px"><span class="a">总股本</span><span class="b2 cy">3.75亿</span><span class="c">流通股</span><span class="d cy">3.75亿</span></div>
<div class="r" style="top:526px"><span class="a">市盈(静)</span><span class="b2 g">90.64</span><span class="c">市盈(TTM)</span><span class="d g">72.85</span></div>

<div class="t g bd" style="left:1341px;top:548px;font-size:13.5px">14:56</div>
<div class="t rd bd" style="left:1431px;top:548px;font-size:13.5px">19.46</div>
<div class="t gr bd" style="left:1514px;top:548px;font-size:13.5px">99</div>
<div class="t cy bd" style="right:4px;top:548px;font-size:13.5px">10</div>
</div></body></html>
